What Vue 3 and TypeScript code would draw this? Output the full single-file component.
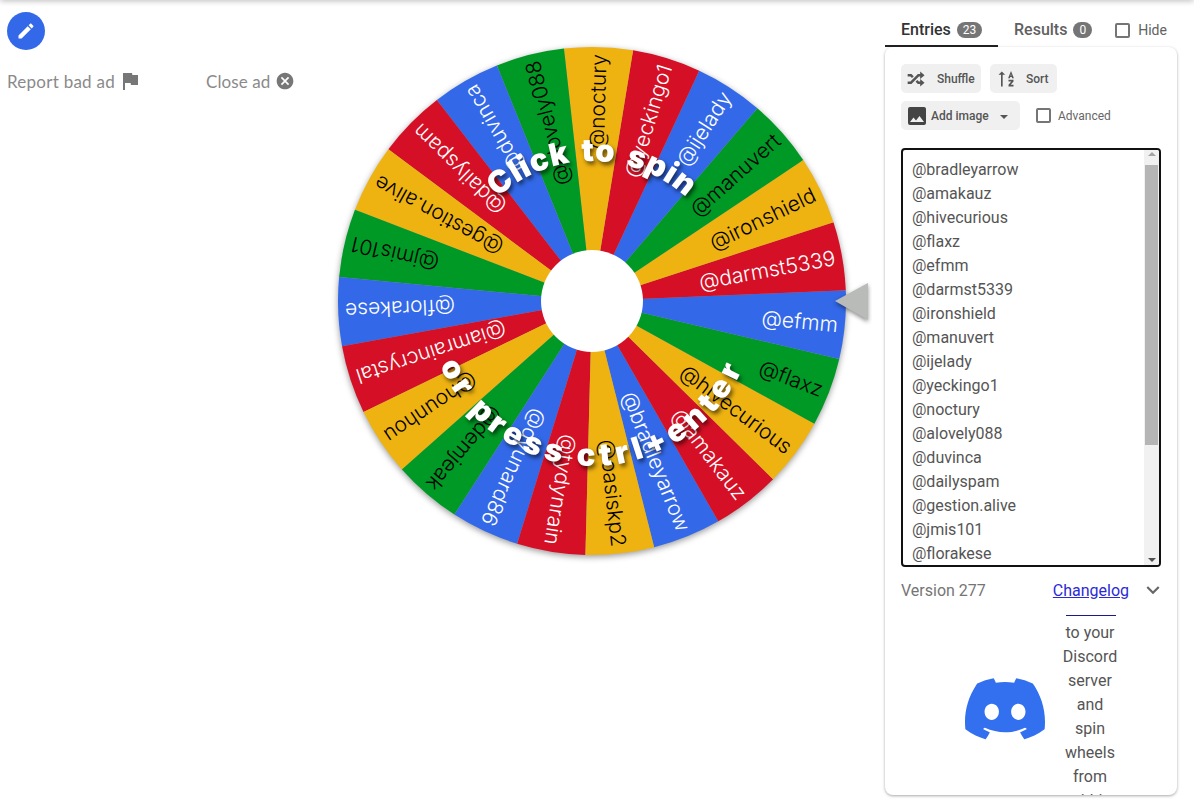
<script setup lang="ts">
const names: string[] = [
  '@bradleyarrow', '@amakauz', '@hivecurious', '@flaxz', '@efmm', '@darmst5339',
  '@ironshield', '@manuvert', '@ijelady', '@yeckingo1', '@noctury', '@alovely088',
  '@duvinca', '@dailyspam', '@gestion.alive', '@jmis101', '@florakese',
  '@iamraincrystal', '@hounhou', '@demjeak', '@dyunard86', '@tydynrain', '@oasiskp2',
]
const entries = names.slice(0, 17)

const colors = ['#3369e8', '#d50f25', '#eeb211', '#009925']
const cx = 280
const cy = 280
const R = 254
const step = 360 / 23

function pt(deg: number, r: number): string {
  const a = (deg * Math.PI) / 180
  return `${(cx + r * Math.cos(a)).toFixed(2)} ${(cy + r * Math.sin(a)).toFixed(2)}`
}

const slices = names.map((name, i) => {
  const angle = 5.4 - (i - 4) * step
  const a0 = angle - step / 2
  const a1 = angle + step / 2
  const color = colors[i % 4]
  return {
    name,
    color,
    angle,
    ink: i % 4 < 2 ? '#ffffff' : '#000000',
    d: `M${cx} ${cy}L${pt(a0, R)}A${R} ${R} 0 0 1 ${pt(a1, R)}Z`,
  }
})
</script>

<template>
  <div class="page">
    <div class="topbar"></div>
    <main class="main">
      <aside class="left">
        <button class="fab" aria-label="Edit">
          <svg viewBox="0 0 24 24" width="20" height="20"><path fill="#fff" d="M20.71,7.04C21.1,6.65 21.1,6 20.71,5.63L18.37,3.29C18,2.9 17.35,2.9 16.96,3.29L15.12,5.12L18.87,8.87M3,17.25V21H6.75L17.81,9.93L14.06,6.18L3,17.25Z"/></svg>
        </button>
        <div class="adrow">
          <span class="adlink report">Report bad ad
            <svg viewBox="4 3 17 19" width="17" height="19"><path fill="#777" d="M14.4,6L14,4H5V21H7V14H12.6L13,16H20V6H14.4Z"/></svg>
          </span>
          <span class="adlink close">Close ad
            <svg viewBox="0 0 24 24" width="20" height="20"><path fill="#777" d="M12,2C17.53,2 22,6.47 22,12C22,17.53 17.53,22 12,22C6.47,22 2,17.53 2,12C2,6.47 6.47,2 12,2M15.59,7L12,10.59L8.41,7L7,8.41L10.59,12L7,15.59L8.41,17L12,13.41L15.59,17L17,15.59L13.41,12L17,8.41L15.59,7Z"/></svg>
          </span>
        </div>
      </aside>

      <svg class="wheel" viewBox="0 0 560 560" width="560" height="560">
        <defs>
          <path id="arcTop" d="M140 280A140 140 0 0 1 420 280"/>
          <path id="arcBottom" d="M115 280A165 165 0 0 0 445 280"/>
        </defs>
        <g class="disc">
          <path v-for="s in slices" :key="s.name" :d="s.d" :fill="s.color"/>
        </g>
        <text
          v-for="s in slices"
          :key="s.name + '-label'"
          class="label"
          :fill="s.ink"
          :x="cx + 247"
          :y="cy + 8"
          text-anchor="end"
          :transform="`rotate(${s.angle} ${cx} ${cy})`"
        >{{ s.name }}</text>
        <circle :cx="cx" :cy="cy" r="51" fill="#fff"/>
        <text class="prompt top" text-anchor="middle"><textPath href="#arcTop" startOffset="50%">Click to spin</textPath></text>
        <text class="prompt bottom" text-anchor="middle"><textPath href="#arcBottom" startOffset="50%">or press ctrl+enter</textPath></text>
        <path class="pointer" d="M556 262V299L523 280Z" fill="#b9bbb8"/>
      </svg>

      <section class="side">
        <header class="tabs">
          <div class="tab active">Entries <span class="badge">23</span></div>
          <div class="tab">Results <span class="badge zero">0</span></div>
          <label class="hide"><span class="check"></span>Hide</label>
        </header>
        <div class="card">
          <div class="tools">
            <button class="btn btn-shuffle">
              <svg viewBox="0 0 24 24" width="20" height="20"><path fill="#555" d="M17,3L22.25,7.5L17,12L22.25,16.5L17,21V18H14.26L11.44,15.18L13.56,13.06L15.5,15H17V12L17,9H15.5L6.5,18H2V15H5.26L14.26,6H17V3M2,6H6.5L9.32,8.82L7.2,10.94L5.26,9H2V6Z"/></svg>
              Shuffle
            </button>
            <button class="btn btn-sort">
              <svg viewBox="0 0 24 24" width="20" height="20"><path fill="#555" d="M6 21V7H3l4-4 4 4H8v14H6zM18 2.5L21.5 11H19.4L18.9 9.5H17.1L16.6 11H14.5ZM18 5.8L17.6 8H18.4ZM21 13v2l-3.33 4H21v2h-6v-2l3.33-4H15v-2z"/></svg>
              Sort
            </button>
          </div>
          <div class="tools second">
            <button class="btn btn-image">
              <svg viewBox="2 2 20 20" width="20" height="20"><path fill="#444" d="M8.5,13.5L11,16.5L14.5,12L19,18H5M21,19V5C21,3.89 20.1,3 19,3H5A2,2 0 0,0 3,5V19A2,2 0 0,0 5,21H19A2,2 0 0,0 21,19Z"/></svg>
              Add image
              <span class="caret"></span>
            </button>
            <label class="advanced"><span class="check"></span>Advanced</label>
          </div>
          <div class="editor">
            <div class="lines">
              <div v-for="e in entries" :key="e">{{ e }}</div>
            </div>
            <div class="scroll">
              <span class="arrow up"></span>
              <span class="thumb"></span>
              <span class="arrow down"></span>
            </div>
          </div>
          <div class="version">
            <span class="vnum">Version 277</span>
            <a class="changelog">Changelog</a>
            <svg viewBox="0 0 24 24" width="26" height="26"><path fill="#666" d="M7.41,8.58L12,13.17L16.59,8.58L18,10L12,16L6,10L7.41,8.58Z"/></svg>
          </div>
          <div class="discord">
            <svg class="dlogo" viewBox="0 2.8 24 18.5" width="80" height="62"><path fill="#3370f0" d="M20.317 4.3698a19.7913 19.7913 0 00-4.8851-1.5152.0741.0741 0 00-.0785.0371c-.211.3753-.4447.8648-.6083 1.2495-1.8447-.2762-3.68-.2762-5.4868 0-.1636-.3933-.4058-.8742-.6177-1.2495a.077.077 0 00-.0785-.037 19.7363 19.7363 0 00-4.8852 1.515.0699.0699 0 00-.0321.0277C.5334 9.0458-.319 13.5799.0992 18.0578a.0824.0824 0 00.0312.0561c2.0528 1.5076 4.0413 2.4228 5.9929 3.0294a.0777.0777 0 00.0842-.0276c.4616-.6304.8731-1.2952 1.226-1.9942a.076.076 0 00-.0416-.1057c-.6528-.2476-1.2743-.5495-1.8722-.8923a.077.077 0 01-.0076-.1277c.1258-.0943.2517-.1923.3718-.2914a.0743.0743 0 01.0776-.0105c3.9278 1.7933 8.18 1.7933 12.0614 0a.0739.0739 0 01.0785.0095c.1202.099.246.1981.3728.2924a.077.077 0 01-.0066.1276 12.2986 12.2986 0 01-1.873.8914.0766.0766 0 00-.0407.1067c.3604.698.7719 1.3628 1.225 1.9932a.076.076 0 00.0842.0286c1.961-.6067 3.9495-1.5219 6.0023-3.0294a.077.077 0 00.0313-.0552c.5004-5.177-.8382-9.6739-3.5485-13.6604a.061.061 0 00-.0312-.0286zM8.02 15.3312c-1.1825 0-2.1569-1.0857-2.1569-2.419 0-1.3332.9555-2.4189 2.157-2.4189 1.2108 0 2.1757 1.0952 2.1568 2.419 0 1.3332-.9555 2.4189-2.1569 2.4189zm7.9748 0c-1.1825 0-2.1569-1.0857-2.1569-2.419 0-1.3332.9554-2.4189 2.1569-2.4189 1.2108 0 2.1757 1.0952 2.1568 2.419 0 1.3332-.946 2.4189-2.1568 2.4189Z"/></svg>
            <div class="dtext">
              <div class="rule"></div>
              <p>to your Discord server and spin wheels from within</p>
            </div>
          </div>
        </div>
      </section>
    </main>
  </div>
</template>

<style>
html, body { margin: 0; background: #fff; overflow: hidden; }
</style>

<style scoped>
.page {
  position: relative;
  width: 1194px;
  height: 811px;
  overflow: hidden;
  background: #fff;
  font-family: Roboto, "Liberation Sans", sans-serif;
}
.topbar {
  position: absolute;
  left: 0;
  right: 0;
  top: -4px;
  height: 4px;
  box-shadow: 0 0 6px rgba(0, 0, 0, 0.4);
}
.main { display: flex; height: 100%; }
.left { width: 312px; flex: none; padding: 12px 0 0 7px; box-sizing: border-box; }
.fab {
  width: 38px;
  height: 38px;
  border: 0;
  padding: 0;
  border-radius: 50%;
  background: #3369e8;
  display: flex;
  align-items: center;
  justify-content: center;
}
.adrow { display: flex; margin-top: 21px; height: 20px; align-items: center; }
.adlink {
  display: flex;
  align-items: center;
  gap: 7px;
  font-family: Lato, sans-serif;
  font-size: 17px;
  letter-spacing: 0.25px;
  color: #8a8a8a;
  white-space: nowrap;
}
.report { width: 199px; }
.close { gap: 5px; letter-spacing: 0.1px; }
.wheel { flex: none; margin-top: 21px; display: block; }
.disc { filter: drop-shadow(0 2px 3px rgba(0, 0, 0, 0.4)); }
.label { font-family: Inter, sans-serif; font-size: 21px; font-weight: 300; }
.prompt {
  font-family: Inter, sans-serif;
  font-size: 31px;
  font-weight: 900;
  fill: #fff;
  filter: drop-shadow(2px 3px 2px rgba(0, 0, 0, 0.6));
}
.prompt.top { letter-spacing: 0.7px; word-spacing: 4px; }
.prompt.bottom { letter-spacing: 5px; }
.pointer { filter: drop-shadow(0 2px 2px rgba(0, 0, 0, 0.45)); }

.side { width: 292px; margin-left: 13px; flex: none; display: flex; flex-direction: column; height: 795px; }
.tabs { display: flex; align-items: flex-start; height: 47px; flex: none; }
.tab {
  box-sizing: border-box;
  height: 47px;
  padding: 20px 16px 0;
  font-size: 16px;
  font-weight: 500;
  color: #616161;
  display: flex;
  gap: 6px;
  align-items: flex-start;
  line-height: 20px;
  white-space: nowrap;
}
.tab.active { color: #333; border-bottom: 2px solid #222; width: 113px; }
.badge {
  margin-top: 2px;
  background: #757575;
  color: #fff;
  font-size: 12px;
  font-weight: 400;
  line-height: 16px;
  height: 16px;
  border-radius: 8px;
  padding: 0 6px;
}
.hide { display: flex; align-items: center; gap: 8px; font-size: 14px; color: #616161; margin-left: 7px; height: 20px; margin-top: 20px; }
.check {
  display: block;
  width: 15px;
  height: 15px;
  box-sizing: border-box;
  border: 2px solid #757575;
  border-radius: 2px;
}
.card {
  flex: 1;
  min-height: 0;
  overflow: hidden;
  box-sizing: border-box;
  padding: 17px 16px 0;
  border-radius: 8px;
  box-shadow: 0 1px 3px rgba(0, 0, 0, 0.35);
}
.tools { display: flex; gap: 9px; align-items: center; }
.tools.second { margin-top: 8px; gap: 16px; }
.btn {
  height: 29px;
  border: 0;
  border-radius: 5px;
  background: #f0f0f0;
  color: #555;
  display: flex;
  align-items: center;
  font-family: Roboto, sans-serif;
  font-size: 12px;
  font-weight: 500;
  padding: 0 0 0 5px;
  box-sizing: border-box;
}
.btn-shuffle { width: 80px; gap: 11px; }
.btn-sort { width: 67px; gap: 10px; padding-left: 6px; }
.btn-image { width: 119px; gap: 4px; padding-left: 6px; }
.caret {
  margin-left: 7px;
  margin-top: 2px;
  border: 4px solid transparent;
  border-top-color: #555;
  border-bottom: 0;
}
.advanced { display: flex; align-items: center; gap: 7px; font-size: 12px; color: #666; }
.editor {
  margin-top: 18px;
  height: 419px;
  width: 260px;
  box-sizing: border-box;
  border: 2px solid #111;
  border-radius: 4px;
  display: flex;
  overflow: hidden;
}
.lines {
  flex: 1;
  padding: 8px 0 0 9px;
  font-size: 16px;
  line-height: 24px;
  color: #555;
  overflow: hidden;
}
.scroll {
  width: 15px;
  flex: none;
  background: #f1f1f1;
  position: relative;
}
.thumb { position: absolute; left: 1px; right: 1px; top: 15px; height: 280px; background: #b5b5b5; }
.arrow { position: absolute; left: 3.5px; border: 4px solid transparent; }
.arrow.up { top: 2px; border-bottom-color: #a3a3a3; border-top: 0; }
.arrow.down { bottom: 3px; border-top-color: #505050; border-bottom: 0; }
.version { display: flex; align-items: center; margin-top: 11px; height: 24px; font-size: 16px; white-space: nowrap; }
.vnum { color: #757575; }
.changelog { margin-left: 67px; color: #2a2ad6; text-decoration: underline; }
.version svg { margin-left: 11px; flex: none; }
.discord { display: flex; align-items: flex-start; margin-top: 13px; }
.dlogo { margin-left: 64px; margin-top: 63px; flex: none; }
.dtext { width: 60px; margin-left: 15px; }
.rule { width: 50px; margin-left: 6px; border-top: 1px solid #1a1a8a; }
.dtext p {
  margin: 5px 0 0;
  font-size: 16px;
  line-height: 24px;
  text-align: center;
  color: #555;
}
</style>
